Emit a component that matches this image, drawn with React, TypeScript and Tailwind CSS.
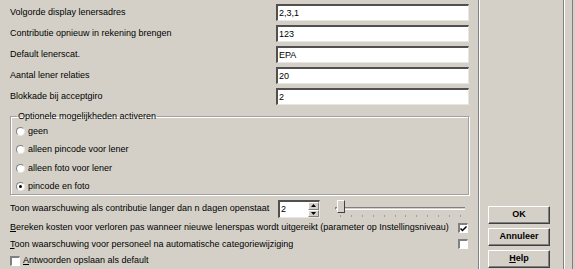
import React from 'react';

const fields = [
  { label: 'Volgorde display lenersadres', value: '2,3,1' },
  { label: 'Contributie opnieuw in rekening brengen', value: '123' },
  { label: 'Default lenerscat.', value: 'EPA' },
  { label: 'Aantal lener relaties', value: '20' },
  { label: 'Blokkade bij acceptgiro', value: '2' },
];

const options = ['geen', 'alleen pincode voor lener', 'alleen foto voor lener', 'pincode en foto'];

function Radio({ checked }: { checked?: boolean }) {
  return (
    <span className="w-[9px] h-[9px] rounded-full border border-t-[#808080] border-l-[#808080] border-b-[#e8e6e0] border-r-[#e8e6e0] bg-white flex items-center justify-center shrink-0">
      {checked && <span className="w-[3px] h-[3px] rounded-full bg-black" />}
    </span>
  );
}

function Check({ checked }: { checked?: boolean }) {
  return (
    <span className="w-[10px] h-[10px] border-t-2 border-l-2 border-t-[#808080] border-l-[#808080] border-b border-r border-b-white border-r-white bg-white flex items-center justify-center shrink-0">
      {checked && (
        <svg width="7" height="6" viewBox="0 0 7 6">
          <path d="M0.5 2.5 L2.5 4.5 L6.5 0.5" stroke="#000" strokeWidth="1.5" fill="none" />
        </svg>
      )}
    </span>
  );
}

function Button({ children }: { children: React.ReactNode }) {
  return (
    <button className="w-[62px] h-[18px] bg-[#d4d0c8] border border-t-white border-l-white border-b-[#404040] border-r-[#404040] shadow-[inset_-1px_-1px_0_#808080] text-[9px] font-bold text-black flex items-center justify-center">
      {children}
    </button>
  );
}

export default function App() {
  return (
    <div className="w-[575px] h-[269px] bg-[#d4d0c8] flex text-black text-[9px] overflow-hidden" style={{ fontFamily: '"Liberation Sans", Arial, sans-serif' }}>
      <div className="w-[478px] shrink-0 pl-[10px] pr-[9px] pt-[4px] flex flex-col">
        <div className="flex flex-col gap-[4px]">
          {fields.map((f) => (
            <div key={f.label} className="flex items-center h-[17px]">
              <span className="w-[266px]">{f.label}</span>
              <div className="flex-1 h-[17px] bg-white border-t-2 border-l-2 border-t-[#505050] border-l-[#505050] border-b border-r border-b-[#e8e6e0] border-r-[#e8e6e0] pl-[1px] leading-[14px]">
                {f.value}
              </div>
            </div>
          ))}
        </div>

        <fieldset className="mt-[5px] h-[85px] border border-[#a0a0a0] shadow-[1px_1px_0_white,inset_1px_1px_0_white] px-[5px] pt-0 pb-0">
          <legend className="px-[1px] ml-[1px] leading-[13px]">Optionele mogelijkheden activeren</legend>
          <div className="flex flex-col -mt-[1px]">
            {options.map((o, i) => (
              <div key={o} className="flex items-center gap-[3px] h-[18.5px]">
                <Radio checked={i === 3} />
                <span>{o}</span>
              </div>
            ))}
          </div>
        </fieldset>

        <div className="flex items-center h-[18px] mt-[5px]">
          <span className="w-[268px]">Toon waarschuwing als contributie langer dan n dagen openstaat</span>
          <div className="w-[42px] h-[18px] bg-white border-t-2 border-l-2 border-t-[#505050] border-l-[#505050] border-b border-r border-b-[#e8e6e0] border-r-[#e8e6e0] flex">
            <span className="flex-1 pl-[1px] leading-[14px]">2</span>
            <div className="w-[11px] flex flex-col">
              <span className="flex-1 bg-[#d4d0c8] border border-t-white border-l-white border-b-[#808080] border-r-[#808080] flex items-center justify-center">
                <svg width="5" height="3" viewBox="0 0 5 3"><path d="M2.5 0 L5 3 L0 3 Z" fill="#000" /></svg>
              </span>
              <span className="flex-1 bg-[#d4d0c8] border border-t-white border-l-white border-b-[#808080] border-r-[#808080] flex items-center justify-center">
                <svg width="5" height="3" viewBox="0 0 5 3"><path d="M0 0 L5 0 L2.5 3 Z" fill="#000" /></svg>
              </span>
            </div>
          </div>
          <div className="ml-[15px] w-[130px] h-[18px] relative">
            <div className="absolute left-0 right-0 top-[7px] h-[3px] border-t border-l border-t-[#808080] border-l-[#808080] border-b border-b-white bg-[#d4d0c8]" />
            <div className="absolute left-[2px] top-[0px] w-[8px] h-[13px] bg-[#d4d0c8] border border-t-white border-l-white border-b-[#404040] border-r-[#404040]" />
            <div className="absolute left-[5px] right-[4px] top-[15px] flex justify-between">
              {Array.from({ length: 12 }).map((_, i) => (
                <span key={i} className="w-[1px] h-[2px] bg-[#a0a0a0]" />
              ))}
            </div>
          </div>
        </div>

        <div className="flex items-center h-[17px] mt-[2px] pr-[1px]">
          <span className="flex-1"><u>B</u>ereken kosten voor verloren pas wanneer nieuwe lenerspas wordt uitgereikt (parameter op Instellingsniveau)</span>
          <Check checked />
        </div>
        <div className="flex items-center h-[17px] pr-[1px]">
          <span className="flex-1"><u>T</u>oon waarschuwing voor personeel na automatische categoriewijziging</span>
          <Check />
        </div>
        <div className="flex items-center gap-[3px] h-[17px]">
          <Check />
          <span><u>A</u>ntwoorden opslaan als default</span>
        </div>
      </div>

      <div className="w-[2px] h-full border-l border-l-[#808080] border-r border-r-white" />

      <div className="flex-1 flex flex-col items-start justify-end pl-[8px] pb-[1px] gap-[4px]">
        <Button>OK</Button>
        <Button>Annuleer</Button>
        <Button><u>H</u>elp</Button>
      </div>

      <div className="w-[9px] h-full flex">
        <div className="w-[2px] h-full border-l border-l-[#808080] border-r border-r-white" />
      </div>
      <div className="w-[3px] h-full border-l border-l-[#808080] bg-[#d4d0c8]" />
    </div>
  );
}
